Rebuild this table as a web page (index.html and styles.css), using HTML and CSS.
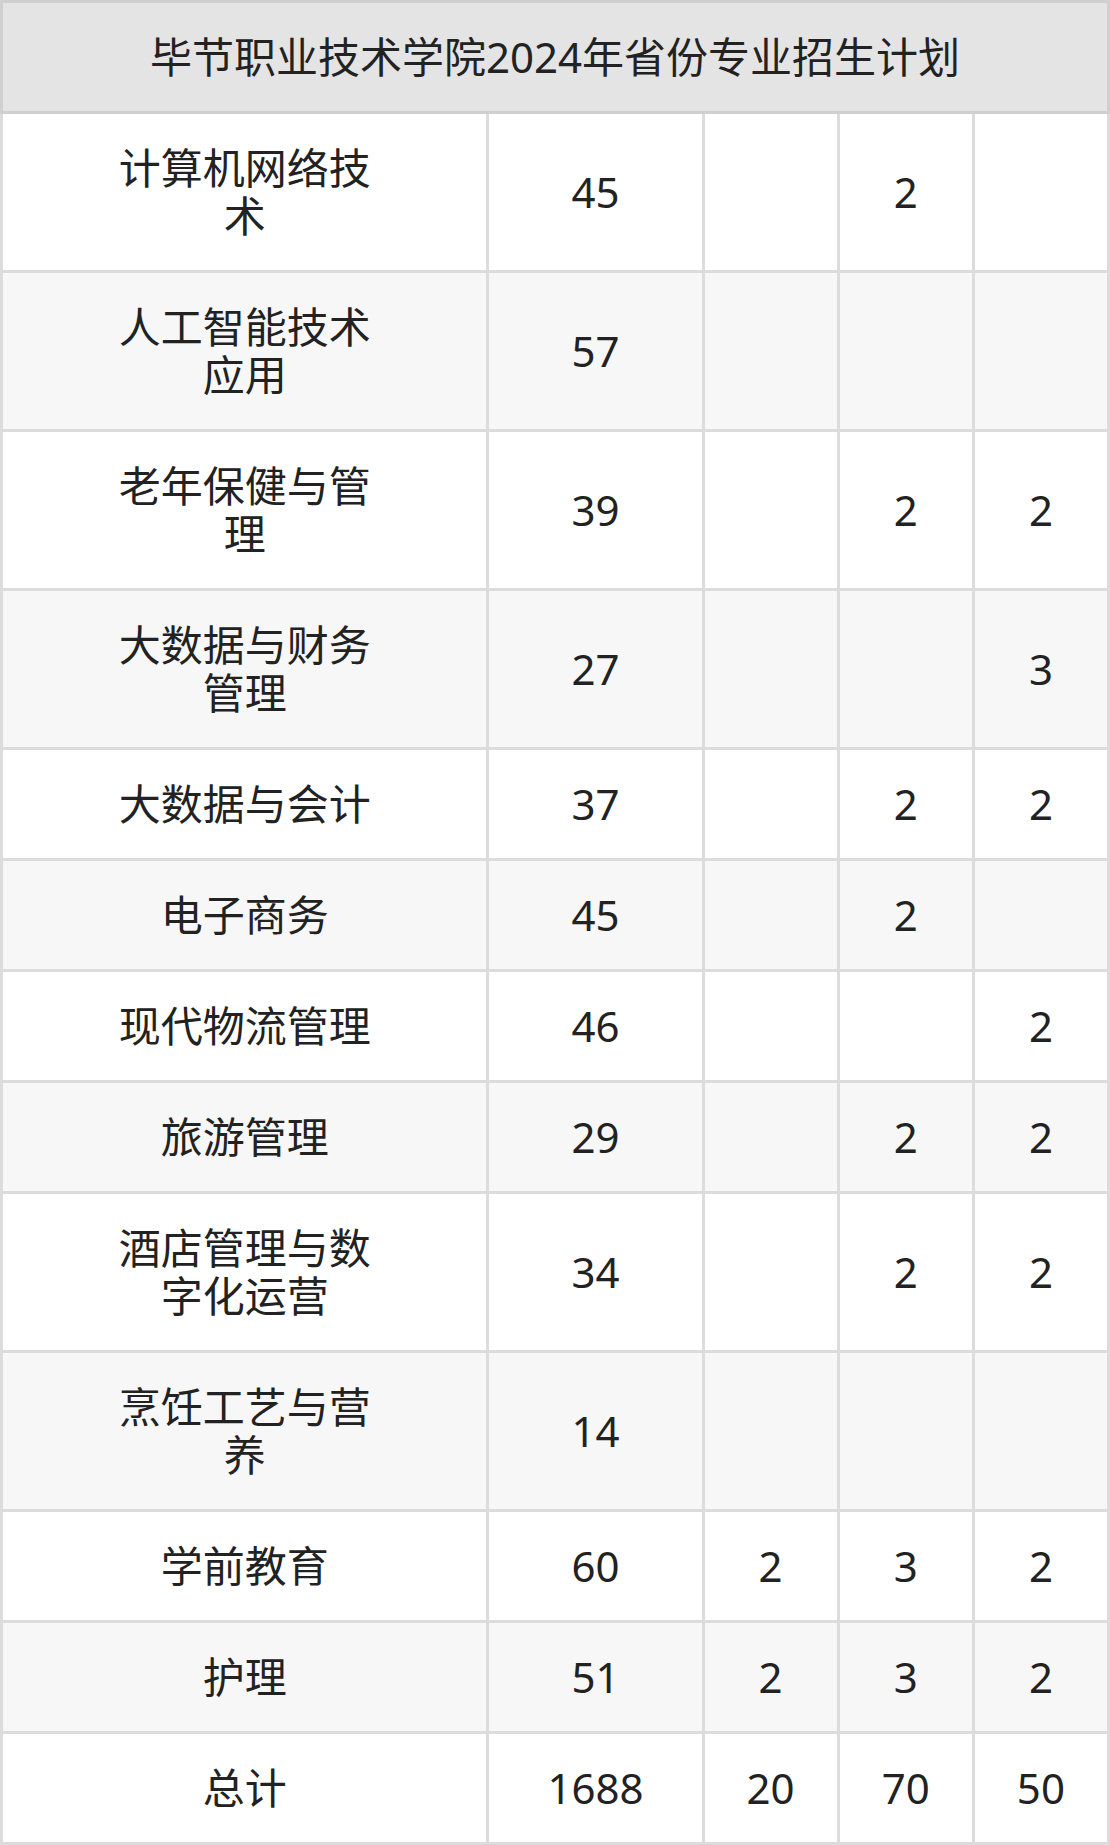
FILE: index.html
```html
<!DOCTYPE html>
<html lang="zh-CN">
<head>
<meta charset="utf-8">
<title>毕节职业技术学院2024年省份专业招生计划</title>
<link rel="stylesheet" href="styles.css">
</head>
<body>
<table class="plan">
  <colgroup>
    <col class="c-name">
    <col class="c-total">
    <col class="c-num">
    <col class="c-num">
    <col class="c-num">
  </colgroup>
  <thead>
    <tr><th colspan="5">毕节职业技术学院2024年省份专业招生计划</th></tr>
  </thead>
  <tbody>
    <tr><td><div class="name">计算机网络技术</div></td><td>45</td><td></td><td>2</td><td></td></tr>
    <tr><td><div class="name">人工智能技术应用</div></td><td>57</td><td></td><td></td><td></td></tr>
    <tr><td><div class="name">老年保健与管理</div></td><td>39</td><td></td><td>2</td><td>2</td></tr>
    <tr><td><div class="name">大数据与财务管理</div></td><td>27</td><td></td><td></td><td>3</td></tr>
    <tr><td><div class="name">大数据与会计</div></td><td>37</td><td></td><td>2</td><td>2</td></tr>
    <tr><td><div class="name">电子商务</div></td><td>45</td><td></td><td>2</td><td></td></tr>
    <tr><td><div class="name">现代物流管理</div></td><td>46</td><td></td><td></td><td>2</td></tr>
    <tr><td><div class="name">旅游管理</div></td><td>29</td><td></td><td>2</td><td>2</td></tr>
    <tr><td><div class="name">酒店管理与数字化运营</div></td><td>34</td><td></td><td>2</td><td>2</td></tr>
    <tr><td><div class="name">烹饪工艺与营养</div></td><td>14</td><td></td><td></td><td></td></tr>
    <tr><td><div class="name">学前教育</div></td><td>60</td><td>2</td><td>3</td><td>2</td></tr>
    <tr><td><div class="name">护理</div></td><td>51</td><td>2</td><td>3</td><td>2</td></tr>
    <tr><td><div class="name">总计</div></td><td>1688</td><td>20</td><td>70</td><td>50</td></tr>
  </tbody>
</table>
</body>
</html>
```
FILE: styles.css
```css
html, body {
  margin: 0;
  padding: 0;
  background: #ffffff;
}

body {
  font-family: "Noto Sans", "Noto Sans CJK SC", sans-serif;
  font-size: 42px;
  line-height: 48px;
  color: #222222;
}

.plan {
  width: 1110px;
  border-collapse: collapse;
  table-layout: fixed;
}

.c-name { width: 486px; }
.c-total { width: 215px; }
.c-num { width: 135px; }

.plan th {
  background: #e4e4e4;
  border: 3px solid #d0d0d0;
  font-weight: 400;
  padding: 30px 0;
  text-align: center;
}

.plan td {
  border: 3px solid #dcdcdc;
  padding: 30px 0;
  text-align: center;
  vertical-align: middle;
}

.plan tbody tr:nth-child(even) td {
  background: #f7f7f7;
}

.name {
  width: 260px;
  margin: 0 auto;
}
```
